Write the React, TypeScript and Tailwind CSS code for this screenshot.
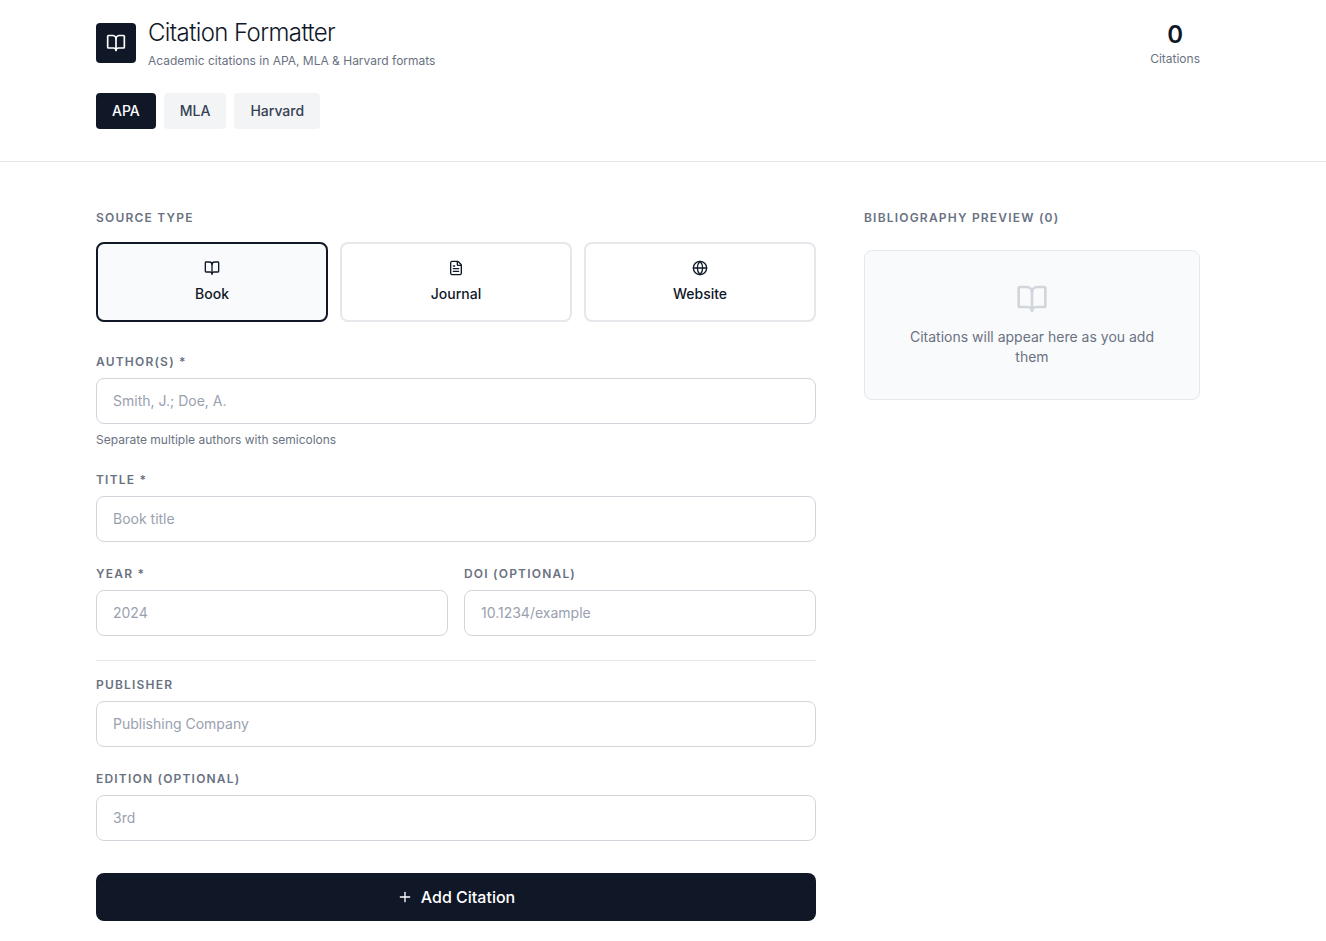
import { useState } from "react";
import { BookOpen, FileText, Globe, Plus } from "lucide-react";
import clsx from "clsx";

type SourceType = "book" | "journal" | "website";

const FORMATS = ["APA", "MLA", "Harvard"];

const SOURCE_TYPES = [
  { id: "book", label: "Book", icon: BookOpen },
  { id: "journal", label: "Journal", icon: FileText },
  { id: "website", label: "Website", icon: Globe },
] as const;

const EXTRA_FIELDS: Record<SourceType, any[]> = {
  book: [
    { name: "publisher", label: "Publisher", placeholder: "Publishing Company" },
    { name: "edition", label: "Edition (optional)", placeholder: "3rd" },
  ],
  journal: [
    { name: "journal", label: "Journal name", placeholder: "Journal of Examples" },
    { name: "pages", label: "Pages", placeholder: "12-34" },
  ],
  website: [
    { name: "site", label: "Website name", placeholder: "Example" },
    { name: "url", label: "URL", placeholder: "https://example.com" },
  ],
};

const headingClass = "text-xs font-semibold uppercase tracking-widest text-gray-500";

function Field({ name, label, placeholder, hint, value, onChange }: any) {
  return (
    <div>
      <label htmlFor={name} className={clsx("block mb-2", headingClass)}>
        {label}
      </label>
      <input
        id={name}
        name={name}
        type="text"
        value={value || ""}
        placeholder={placeholder}
        onChange={(e) => onChange(name, e.target.value)}
        className="block w-full rounded-lg border border-gray-300 bg-white px-4 py-3 text-sm text-gray-900 placeholder:text-gray-400 focus:border-gray-900 focus:outline-none"
      />
      {hint && <p className="mt-2 text-xs text-gray-500">{hint}</p>}
    </div>
  );
}

export default function App() {
  const [format, setFormat] = useState("APA");
  const [sourceType, setSourceType] = useState<SourceType>("book");
  const [values, setValues] = useState<Record<string, string>>({});
  const [citations, setCitations] = useState<Record<string, string>[]>([]);

  const handleChange = (name: string, value: string) => {
    setValues((prev) => ({ ...prev, [name]: value }));
  };

  const handleSubmit = (e: React.FormEvent) => {
    e.preventDefault();
    if (!values.authors || !values.title || !values.year) {
      return;
    }
    setCitations((prev) => [...prev, values]);
    setValues({});
  };

  const formatCitation = (c: Record<string, string>) => {
    const source = c.publisher || c.journal || c.site || "";
    if (format === "MLA") {
      return `${c.authors} ${c.title}. ${source}, ${c.year}.`;
    }
    if (format === "Harvard") {
      return `${c.authors} ${c.year}, ${c.title}, ${source}.`;
    }
    return `${c.authors} (${c.year}). ${c.title}. ${source}`;
  };

  const fieldProps = (name: string) => ({
    name,
    value: values[name],
    onChange: handleChange,
  });

  return (
    <div className="min-h-screen bg-white font-['Inter',sans-serif] text-gray-900">
      <header className="border-b border-gray-200">
        <div className="max-w-[1200px] pl-24 pt-[17px] pb-8">
          <div className="mb-6 flex items-center justify-between">
            <div className="flex items-center gap-3">
              <div className="flex h-10 w-10 items-center justify-center rounded-sm bg-gray-900">
                <BookOpen className="h-5 w-5 text-white" />
              </div>
              <div>
                <h1 className="text-2xl font-light tracking-tight">Citation Formatter</h1>
                <p className="mt-1 text-xs text-gray-500">
                  Academic citations in APA, MLA &amp; Harvard formats
                </p>
              </div>
            </div>
            <div className="text-center">
              <div className="text-2xl font-semibold">{citations.length}</div>
              <div className="text-xs text-gray-500">Citations</div>
            </div>
          </div>
          <div className="flex gap-2">
            {FORMATS.map((item) => (
              <button
                key={item}
                type="button"
                onClick={() => setFormat(item)}
                className={clsx(
                  "rounded-sm px-4 py-2 text-sm font-medium",
                  format === item
                    ? "bg-gray-900 text-white"
                    : "bg-gray-100 text-gray-700 hover:bg-gray-200"
                )}
              >
                {item}
              </button>
            ))}
          </div>
        </div>
      </header>

      <main className="grid max-w-[1200px] grid-cols-3 items-start gap-12 pl-24 pt-12 pb-5">
        <form className="col-span-2" onSubmit={handleSubmit}>
          <h2 className={clsx("mb-4", headingClass)}>Source type</h2>
          <div className="mb-8 grid grid-cols-3 gap-3">
            {SOURCE_TYPES.map(({ id, label, icon: Icon }) => (
              <button
                key={id}
                type="button"
                onClick={() => setSourceType(id)}
                className={clsx(
                  "flex flex-col items-center gap-2 rounded-lg border-2 p-4 text-sm font-medium",
                  sourceType === id
                    ? "border-gray-900 bg-gray-50"
                    : "border-gray-200 bg-white hover:border-gray-300"
                )}
              >
                <Icon className="h-4 w-4" />
                {label}
              </button>
            ))}
          </div>

          <div className="space-y-6">
            <Field
              {...fieldProps("authors")}
              label="Author(s) *"
              placeholder="Smith, J.; Doe, A."
              hint="Separate multiple authors with semicolons"
            />
            <Field {...fieldProps("title")} label="Title *" placeholder="Book title" />
            <div className="grid grid-cols-2 gap-4">
              <Field {...fieldProps("year")} label="Year *" placeholder="2024" />
              <Field {...fieldProps("doi")} label="DOI (optional)" placeholder="10.1234/example" />
            </div>
            <div className="space-y-6 border-t border-gray-200 pt-4">
              {EXTRA_FIELDS[sourceType].map((field) => (
                <Field
                  key={field.name}
                  {...fieldProps(field.name)}
                  label={field.label}
                  placeholder={field.placeholder}
                />
              ))}
            </div>
          </div>

          <button
            type="submit"
            className="mt-8 flex w-full items-center justify-center gap-2 rounded-lg bg-gray-900 py-3 text-base font-medium text-white hover:bg-gray-800"
          >
            <Plus className="h-4 w-4" />
            Add Citation
          </button>
        </form>

        <section>
          <h2 className={clsx("mb-6", headingClass)}>
            Bibliography preview ({citations.length})
          </h2>
          {!citations.length && (
            <div className="rounded-lg border border-gray-200 bg-gray-50 p-8 text-center">
              <BookOpen className="mx-auto mb-3 h-8 w-8 text-gray-300" />
              <p className="text-sm text-gray-500">Citations will appear here as you add them</p>
            </div>
          )}
          {!!citations.length && (
            <ul className="space-y-3">
              {citations.map((citation, i) => (
                <li key={i} className="rounded-lg border border-gray-200 p-4 text-sm">
                  {formatCitation(citation)}
                </li>
              ))}
            </ul>
          )}
        </section>
      </main>
    </div>
  );
}
